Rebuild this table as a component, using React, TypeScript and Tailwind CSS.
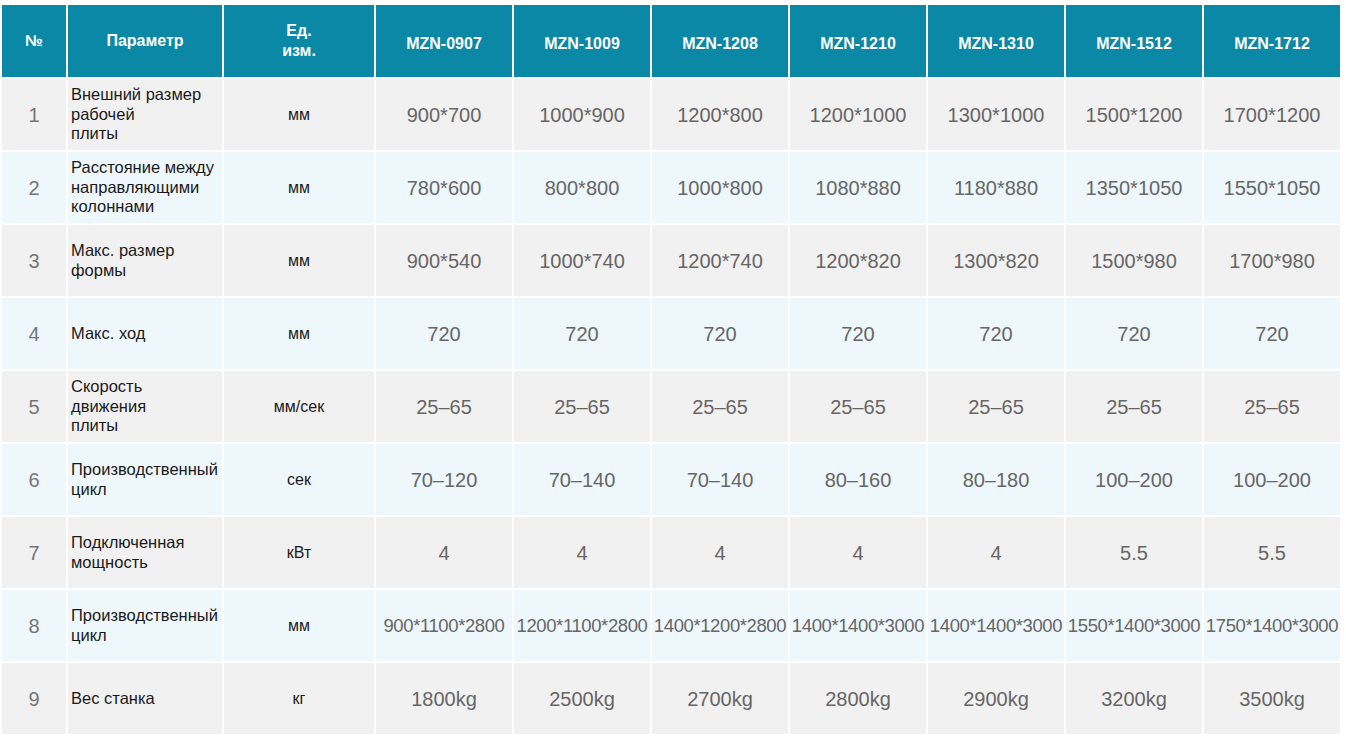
const models = ["MZN-0907", "MZN-1009", "MZN-1208", "MZN-1210", "MZN-1310", "MZN-1512", "MZN-1712"];

const rows = [
  { n: 1, param: ["Внешний размер", "рабочей", "плиты"], unit: "мм", values: ["900*700", "1000*900", "1200*800", "1200*1000", "1300*1000", "1500*1200", "1700*1200"] },
  { n: 2, param: ["Расстояние между", "направляющими", "колоннами"], unit: "мм", values: ["780*600", "800*800", "1000*800", "1080*880", "1180*880", "1350*1050", "1550*1050"] },
  { n: 3, param: ["Макс. размер", "формы"], unit: "мм", values: ["900*540", "1000*740", "1200*740", "1200*820", "1300*820", "1500*980", "1700*980"] },
  { n: 4, param: ["Макс. ход"], unit: "мм", values: ["720", "720", "720", "720", "720", "720", "720"] },
  { n: 5, param: ["Скорость", "движения", "плиты"], unit: "мм/сек", values: ["25–65", "25–65", "25–65", "25–65", "25–65", "25–65", "25–65"] },
  { n: 6, param: ["Производственный", "цикл"], unit: "сек", values: ["70–120", "70–140", "70–140", "80–160", "80–180", "100–200", "100–200"] },
  { n: 7, param: ["Подключенная", "мощность"], unit: "кВт", values: ["4", "4", "4", "4", "4", "5.5", "5.5"] },
  { n: 8, param: ["Производственный", "цикл"], unit: "мм", values: ["900*1100*2800", "1200*1100*2800", "1400*1200*2800", "1400*1400*3000", "1400*1400*3000", "1550*1400*3000", "1750*1400*3000"], small: true },
  { n: 9, param: ["Вес станка"], unit: "кг", values: ["1800kg", "2500kg", "2700kg", "2800kg", "2900kg", "3200kg", "3500kg"] },
];

export default function App() {
  return (
    <div className="min-h-screen bg-white pl-[2px] pt-[5px] font-['Liberation_Sans',Arial,sans-serif]">
      <div className="grid w-[1338px] grid-cols-[64px_154px_150px_repeat(7,136px)] grid-rows-[72px_repeat(9,71px)] gap-[2px] bg-white">
        {/* Header */}
        <div className="flex items-center justify-center bg-[#0a88a5] text-[16px] font-bold text-white">№</div>
        <div className="flex items-center justify-center bg-[#0a88a5] text-[16px] font-bold text-white">Параметр</div>
        <div className="flex flex-col items-center justify-center bg-[#0a88a5] text-[16px] font-bold leading-[20px] text-white">
          <span>Ед.</span>
          <span>изм.</span>
        </div>
        {models.map((m) => (
          <div key={m} className="flex items-center justify-center bg-[#0a88a5] pt-[6px] text-[16px] font-bold text-white">
            {m}
          </div>
        ))}

        {/* Body */}
        {rows.map((r) => {
          const bg = r.n % 2 === 1 ? "bg-[#f2f1f1]" : "bg-[#eef7fc]";
          return [
            <div key={`n${r.n}`} className={`flex items-center justify-center ${bg} text-[20px] text-[#767676]`}>
              {r.n}
            </div>,
            <div key={`p${r.n}`} className={`flex flex-col justify-center ${bg} pl-[3px] text-[16.5px] leading-[19.5px] text-[#1a1a1a]`}>
              {r.param.map((l) => (
                <span key={l}>{l}</span>
              ))}
            </div>,
            <div key={`u${r.n}`} className={`flex items-center justify-center ${bg} text-[16px] text-[#1a1a1a]`}>
              {r.unit}
            </div>,
            ...r.values.map((v, i) => (
              <div
                key={`v${r.n}-${i}`}
                className={`flex items-center justify-center whitespace-nowrap ${bg} text-[#666] ${r.small ? "text-[18.5px] tracking-[-0.4px]" : "text-[20px]"}`}
              >
                {v}
              </div>
            )),
          ];
        })}
      </div>
    </div>
  );
}
